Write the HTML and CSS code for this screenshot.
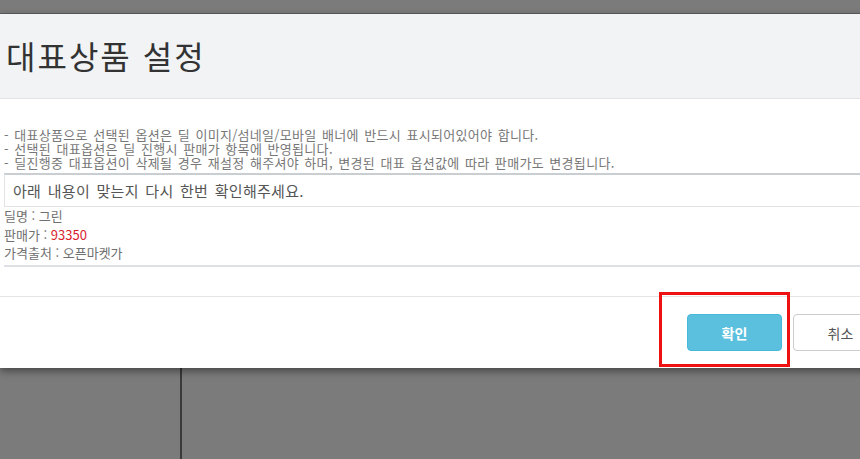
FILE: index.html
```html
<!DOCTYPE html>
<html lang="ko">
<head>
    <meta charset="UTF-8">
    <meta name="viewport" content="width=device-width, initial-scale=1.0">
    <title>대표상품 설정</title>
    <link rel="stylesheet" href="styles.css">
</head>
<body>
    <div class="backdrop-top"></div>

    <div class="modal">
        <div class="modal-header">
            <h2>대표상품 설정</h2>
        </div>

        <div class="modal-body">
            <p class="notice">- 대표상품으로 선택된 옵션은 딜 이미지/섬네일/모바일 배너에 반드시 표시되어있어야 합니다.</p>
            <p class="notice">- 선택된 대표옵션은 딜 진행시 판매가 항목에 반영됩니다.</p>
            <p class="notice">- 딜진행중 대표옵션이 삭제될 경우 재설정 해주셔야 하며, 변경된 대표 옵션값에 따라 판매가도 변경됩니다.</p>

            <div class="confirm-box">아래 내용이 맞는지 다시 한번 확인해주세요.</div>

            <div class="deal-info">
                <p>딜명 : 그린</p>
                <p>판매가 : <span class="price">93350</span></p>
                <p>가격출처 : 오픈마켓가</p>
            </div>
        </div>

        <div class="modal-footer">
            <button class="btn btn-ok">확인</button>
            <button class="btn btn-cancel">취소</button>
        </div>

        <!-- 스크린샷 강조 표시 -->
        <div class="highlight"></div>
    </div>

    <div class="backdrop-bottom">
        <div class="side-col"></div>
        <div class="main-col"></div>
    </div>
</body>
</html>
```

FILE: styles.css
```css
html, body {
    margin: 0;
    padding: 0;
    overflow: hidden;
}
body {
    width: 860px;
    height: 459px;
    background-color: #7b7b7b;
    font-family: "Noto Sans CJK KR", "Noto Sans", sans-serif;
}
.backdrop-top {
    height: 13px;
    background-color: #7b7b7b;
    border-bottom: 1px solid #5e5e5e;
}
.modal {
    position: relative;
    width: 905px;
    background-color: white;
    box-shadow: 0 3px 8px rgba(0,0,0,0.45);
    z-index: 2;
}
.modal-header {
    height: 85px;
    background-color: #f2f3f5;
    border-bottom: 1px solid #e2e2e2;
    box-sizing: border-box;
    padding: 0 0 0 6px;
    display: flex;
    align-items: center;
}
.modal-header h2 {
    margin: 0 0 2px 0;
    font-size: 32px;
    font-weight: normal;
    letter-spacing: 2px;
    color: #333;
}
.modal-body {
    padding: 29px 0 0 4px;
    height: 198px;
    box-sizing: border-box;
    border-bottom: 1px solid #e5e5e5;
}
.notice {
    margin: 0;
    font-size: 13px;
    line-height: 14px;
    height: 14px;
    word-spacing: 1.5px;
    letter-spacing: 0.3px;
    color: #777;
}
.confirm-box {
    margin-top: 3px;
    height: 34px;
    border-top: 2px solid #c9ced3;
    border-left: 1px solid #e3e3e3;
    border-bottom: 1px solid #e3e3e3;
    box-sizing: border-box;
    padding: 0 0 0 8px;
    display: flex;
    align-items: center;
    font-size: 15px;
    word-spacing: 2px;
    letter-spacing: 0.3px;
    color: #555;
}
.deal-info {
    border-bottom: 2px solid #dde0e4;
    padding: 0 0 2px 0;
}
.deal-info p {
    margin: 0;
    font-size: 13px;
    line-height: 18.5px;
    color: #707070;
}
.price {
    color: #d9232d;
}
.modal-footer {
    height: 71px;
    box-sizing: border-box;
    padding: 17px 0 0 687px;
    display: flex;
    gap: 11px;
    align-items: flex-start;
}
.btn {
    height: 37px;
    width: 95px;
    border-radius: 4px;
    font-family: "Noto Sans CJK KR", "Noto Sans", sans-serif;
    font-size: 14px;
    cursor: pointer;
}
.btn-ok {
    background-color: #5bc0de;
    border: 1px solid #46b8da;
    color: white;
    font-weight: bold;
}
.btn-cancel {
    background-color: white;
    border: 1px solid #ccc;
    color: #555;
}
.highlight {
    position: absolute;
    left: 659px;
    top: 278px;
    width: 131px;
    height: 75px;
    border: 3px solid #ee1111;
    box-sizing: border-box;
}
.backdrop-bottom {
    display: flex;
    height: 100px;
}
.side-col {
    width: 180px;
    border-right: 2px solid #3a3a3a;
}
.main-col {
    flex: 1;
}
```
